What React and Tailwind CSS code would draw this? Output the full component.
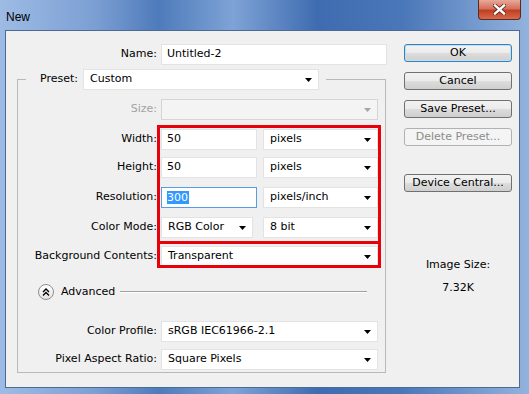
import React from 'react'

function Arrow({ dim }) {
  return (
    <svg width="7" height="4" viewBox="0 0 7 4" className="shrink-0">
      <path d="M0 0h7L3.5 4z" fill={dim ? '#a6a6a6' : '#000'} />
    </svg>
  )
}

function Field({ w, focus, children }) {
  return (
    <div className={`${w} h-[21px] flex items-center pl-[5px] bg-white border ${focus ? 'border-[#569de5]' : 'border-[#e3e3e3]'}`}>
      {children}
    </div>
  )
}

function Select({ w, value, disabled }) {
  return (
    <div className={`${w} h-[21px] flex items-center justify-between pl-[6px] pr-[6px] border ${disabled ? 'bg-[#f4f4f4] border-[#d5d5d5]' : 'bg-white border-[#e3e3e3]'}`}>
      <span>{value}</span>
      <Arrow dim={disabled} />
    </div>
  )
}

function Row({ label, mt, dim, children }) {
  return (
    <div className={`flex items-center ${mt}`}>
      <div className={`w-[139px] text-right ${dim ? 'text-[#a3a3a3]' : ''}`}>{label}</div>
      <div className="ml-[4px] flex">{children}</div>
    </div>
  )
}

function Btn({ children, kind, mt }) {
  const look =
    kind === 'default'
      ? 'border-[#3c7fb1] shadow-[inset_0_0_0_1px_#b9e1f7] bg-[linear-gradient(#f3f3f3,#ebebeb_50%,#dddddd_50%,#cfcfcf)]'
      : kind === 'disabled'
      ? 'border-[#adb2b5] bg-[#f4f4f4] text-[#8c8c8c]'
      : 'border-[#707070] bg-[linear-gradient(#f2f2f2,#ebebeb_50%,#dddddd_50%,#cfcfcf)]'
  return (
    <div className={`${mt} w-[108px] h-[18px] flex items-center justify-center rounded-[3px] border ${look}`}>
      {children}
    </div>
  )
}

export default function App() {
  return (
    <div className="relative w-[529px] h-[394px] flex flex-col font-['DejaVu_Sans',sans-serif] text-[11px] text-black bg-[linear-gradient(90deg,#9dbbe4_0%,#7c9fd3_18%,#4e7bbb_30%,#7ea3d6_44%,#3f6cb0_60%,#4a77b8_76%,#93b3dd_100%)]">
      {/* title bar */}
      <div className="h-[30px] flex items-start justify-between">
        <span className="ml-[6px] mt-[8px] text-[12px] font-['Liberation_Sans',sans-serif] text-black">New</span>
        <div className="mr-[8px] w-[43px] h-[20px] flex items-center justify-center rounded-b-[4px] border border-t-0 border-[#5b2a22] bg-[linear-gradient(#e9a99a,#d4705b_45%,#c13f22_55%,#d86a4c)]">
          <svg width="13" height="11" viewBox="0 0 13 11">
            <path d="M2 1.5l9 8M11 1.5l-9 8" stroke="#5b2416" strokeWidth="4" strokeLinecap="square" />
            <path d="M2 1.5l9 8M11 1.5l-9 8" stroke="#fff" strokeWidth="2.4" strokeLinecap="square" />
          </svg>
        </div>
      </div>

      {/* dialog body */}
      <div className="flex-1 ml-[5px] mr-[9px] mb-[6px] flex border border-[#4c6a93] bg-[#f0f0f0]">
        <div className="w-[398px] pt-[13px]">
          <div className="flex items-center">
            <div className="w-[151px] text-right">Name:</div>
            <div className="ml-[4px]">
              <Field w="w-[226px]">Untitled-2</Field>
            </div>
          </div>

          <fieldset className="mt-[4px] ml-[11px] w-[369px] border border-[#b9b9b9] pb-[2px]">
            <legend className="ml-[8px] pl-[14px] pr-[7px]">
              <div className="flex items-center">
                <span>Preset:</span>
                <div className="ml-[5px]">
                  <Select w="w-[236px]" value="Custom" />
                </div>
              </div>
            </legend>

            <Row label="Size:" mt="mt-[9px]" dim>
              <Select w="w-[217px]" value="" disabled />
            </Row>
            <Row label="Width:" mt="mt-[9px]">
              <Field w="w-[96px]">50</Field>
              <div className="ml-[6px]"><Select w="w-[115px]" value="pixels" /></div>
            </Row>
            <Row label="Height:" mt="mt-[7px]">
              <Field w="w-[96px]">50</Field>
              <div className="ml-[6px]"><Select w="w-[115px]" value="pixels" /></div>
            </Row>
            <Row label="Resolution:" mt="mt-[9px]">
              <Field w="w-[96px]" focus>
                <span className="bg-[#3399ff] text-white leading-[13px] pr-[1px]">300</span>
              </Field>
              <div className="ml-[6px]"><Select w="w-[115px]" value="pixels/inch" /></div>
            </Row>
            <Row label="Color Mode:" mt="mt-[9px]">
              <Select w="w-[92px]" value="RGB Color" />
              <div className="ml-[10px]"><Select w="w-[115px]" value="8 bit" /></div>
            </Row>
            <Row label="Background Contents:" mt="mt-[8px]">
              <Select w="w-[217px]" value="Transparent" />
            </Row>

            <div className="mt-[17px] h-[16px] flex items-center">
              <div className="ml-[20px] w-[16px] h-[16px] rounded-full border border-[#8d8d8d] bg-[linear-gradient(#ffffff,#e4e4e4)] flex items-center justify-center">
                <svg width="8" height="8" viewBox="0 0 8 8">
                  <path d="M1 4L4 1l3 3M1 7.5L4 4.5l3 3" fill="none" stroke="#000" strokeWidth="1.4" />
                </svg>
              </div>
              <span className="ml-[7px]">Advanced</span>
              <div className="flex-1 ml-[5px] mr-[18px] border-t border-b border-t-[#a0a0a0] border-b-white" />
            </div>

            <Row label="Color Profile:" mt="mt-[21px]">
              <Select w="w-[217px]" value="sRGB IEC61966-2.1" />
            </Row>
            <Row label="Pixel Aspect Ratio:" mt="mt-[7px]">
              <Select w="w-[217px]" value="Square Pixels" />
            </Row>
          </fieldset>
        </div>

        <div className="w-[108px] pt-[13px] flex flex-col">
          <Btn kind="default" mt="">OK</Btn>
          <Btn mt="mt-[10px]">Cancel</Btn>
          <Btn mt="mt-[10px]">Save Preset...</Btn>
          <Btn kind="disabled" mt="mt-[10px]">Delete Preset...</Btn>
          <Btn mt="mt-[28px]">Device Central...</Btn>
          <div className="mt-[66px] text-center leading-[13px]">Image Size:</div>
          <div className="mt-[10px] text-center leading-[13px]">7.32K</div>
        </div>
      </div>

      {/* red annotation boxes */}
      <div className="absolute left-[157px] top-[125px] w-[224px] h-[119px] border-[3px] border-[#e8000b]" />
      <div className="absolute left-[157px] top-[241px] w-[224px] h-[27px] border-[3px] border-[#e8000b]" />
    </div>
  )
}
